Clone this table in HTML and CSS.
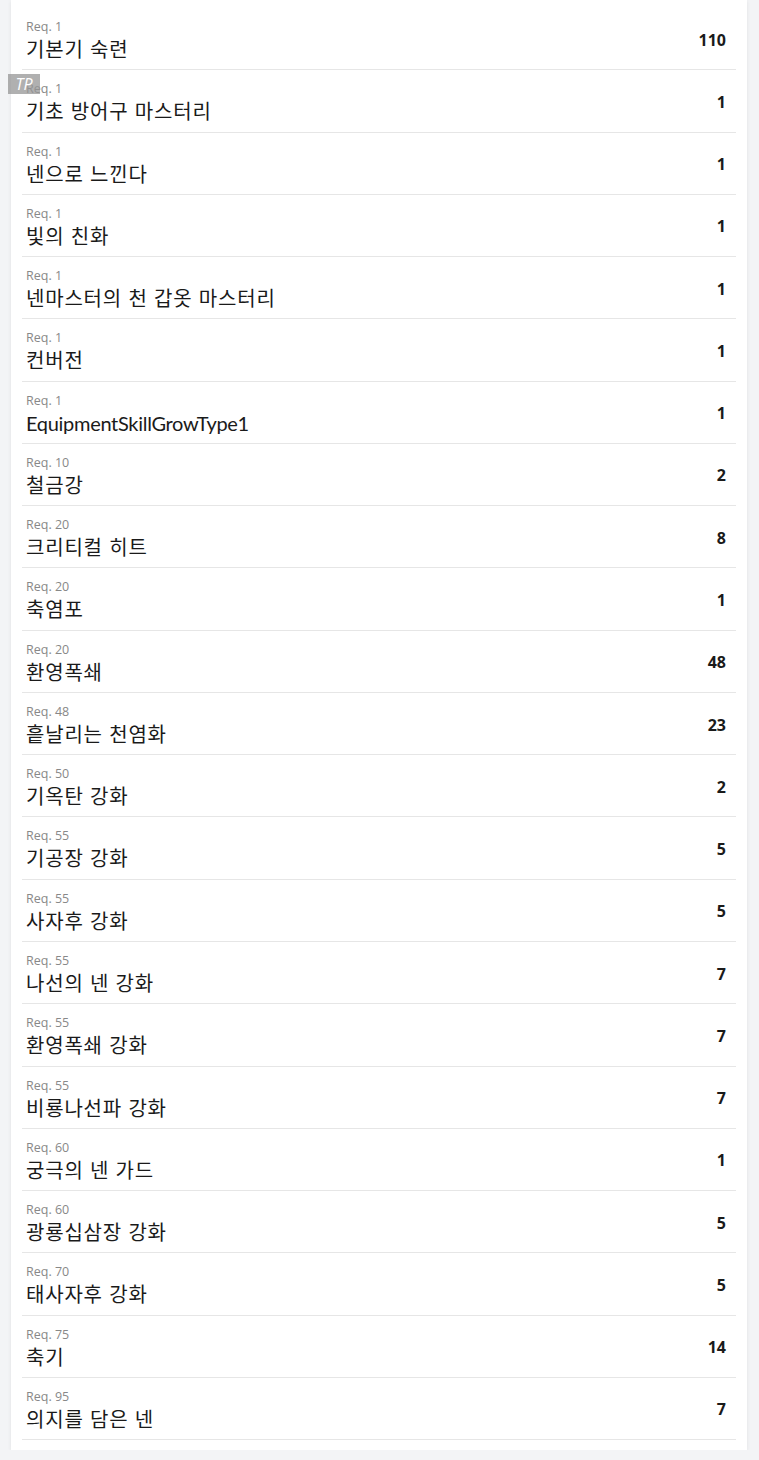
FILE: index.html
```html
<!DOCTYPE html>
<html lang="ko">
<head>
<meta charset="utf-8">
<title>Skills</title>
<link rel="stylesheet" href="styles.css">
</head>
<body>
<div class="card">
  <ul class="list">
    <li class="row"><div class="info"><span class="req">Req. 1</span><span class="name">기본기 숙련</span></div><span class="num">110</span></li>
    <li class="row"><div class="info"><span class="req">Req. 1</span><span class="name">기초 방어구 마스터리</span></div><span class="num">1</span><span class="badge">TP</span></li>
    <li class="row"><div class="info"><span class="req">Req. 1</span><span class="name">넨으로 느낀다</span></div><span class="num">1</span></li>
    <li class="row"><div class="info"><span class="req">Req. 1</span><span class="name">빛의 친화</span></div><span class="num">1</span></li>
    <li class="row"><div class="info"><span class="req">Req. 1</span><span class="name">넨마스터의 천 갑옷 마스터리</span></div><span class="num">1</span></li>
    <li class="row"><div class="info"><span class="req">Req. 1</span><span class="name">컨버전</span></div><span class="num">1</span></li>
    <li class="row"><div class="info"><span class="req">Req. 1</span><span class="name latin">EquipmentSkillGrowType1</span></div><span class="num">1</span></li>
    <li class="row"><div class="info"><span class="req">Req. 10</span><span class="name">철금강</span></div><span class="num">2</span></li>
    <li class="row"><div class="info"><span class="req">Req. 20</span><span class="name">크리티컬 히트</span></div><span class="num">8</span></li>
    <li class="row"><div class="info"><span class="req">Req. 20</span><span class="name">축염포</span></div><span class="num">1</span></li>
    <li class="row"><div class="info"><span class="req">Req. 20</span><span class="name">환영폭쇄</span></div><span class="num">48</span></li>
    <li class="row"><div class="info"><span class="req">Req. 48</span><span class="name">흩날리는 천염화</span></div><span class="num">23</span></li>
    <li class="row"><div class="info"><span class="req">Req. 50</span><span class="name">기옥탄 강화</span></div><span class="num">2</span></li>
    <li class="row"><div class="info"><span class="req">Req. 55</span><span class="name">기공장 강화</span></div><span class="num">5</span></li>
    <li class="row"><div class="info"><span class="req">Req. 55</span><span class="name">사자후 강화</span></div><span class="num">5</span></li>
    <li class="row"><div class="info"><span class="req">Req. 55</span><span class="name">나선의 넨 강화</span></div><span class="num">7</span></li>
    <li class="row"><div class="info"><span class="req">Req. 55</span><span class="name">환영폭쇄 강화</span></div><span class="num">7</span></li>
    <li class="row"><div class="info"><span class="req">Req. 55</span><span class="name">비룡나선파 강화</span></div><span class="num">7</span></li>
    <li class="row"><div class="info"><span class="req">Req. 60</span><span class="name">궁극의 넨 가드</span></div><span class="num">1</span></li>
    <li class="row"><div class="info"><span class="req">Req. 60</span><span class="name">광룡십삼장 강화</span></div><span class="num">5</span></li>
    <li class="row"><div class="info"><span class="req">Req. 70</span><span class="name">태사자후 강화</span></div><span class="num">5</span></li>
    <li class="row"><div class="info"><span class="req">Req. 75</span><span class="name">축기</span></div><span class="num">14</span></li>
    <li class="row"><div class="info"><span class="req">Req. 95</span><span class="name">의지를 담은 넨</span></div><span class="num">7</span></li>
  </ul>
</div>
</body>
</html>
```
FILE: styles.css
```css
html, body {
  margin: 0;
  padding: 0;
}
body {
  background: #f3f4f6;
  font-family: "Open Sans", "Noto Sans CJK KR", sans-serif;
  color: #1e1e1e;
}
.card {
  margin-left: 11px;
  width: 736px;
  box-sizing: border-box;
  background: #ffffff;
  padding: 8px 11px 10px;
  box-shadow: 0 1px 4px rgba(0, 0, 0, 0.08);
}
.list {
  list-style: none;
  margin: 0;
  padding: 0;
}
.row {
  position: relative;
  box-sizing: border-box;
  height: 62.27px;
  border-bottom: 1px solid #e6e6e6;
  display: flex;
  align-items: center;
  justify-content: space-between;
  padding: 0 10px 0 4px;
}
.info {
  display: flex;
  flex-direction: column;
  align-self: stretch;
  padding-top: 11px;
}
.req {
  font-size: 12.5px;
  line-height: 16px;
  color: #888888;
}
.name {
  font-family: "Noto Sans CJK KR", sans-serif;
  font-size: 20px;
  line-height: 28px;
  letter-spacing: 0.8px;
  color: #1a1a1a;
}
.name.latin {
  font-family: "Lato", "Noto Sans CJK KR", sans-serif;
  letter-spacing: -0.3px;
}
.num {
  font-size: 16px;
  font-weight: 700;
  color: #1a1a1a;
  margin-top: 2px;
}
.badge {
  position: absolute;
  left: -14px;
  top: 4px;
  width: 32px;
  height: 20px;
  background: rgba(150, 150, 150, 0.75);
  color: #ffffff;
  font-style: italic;
  font-size: 16px;
  line-height: 20px;
  text-align: center;
  font-weight: 400;
}
```
